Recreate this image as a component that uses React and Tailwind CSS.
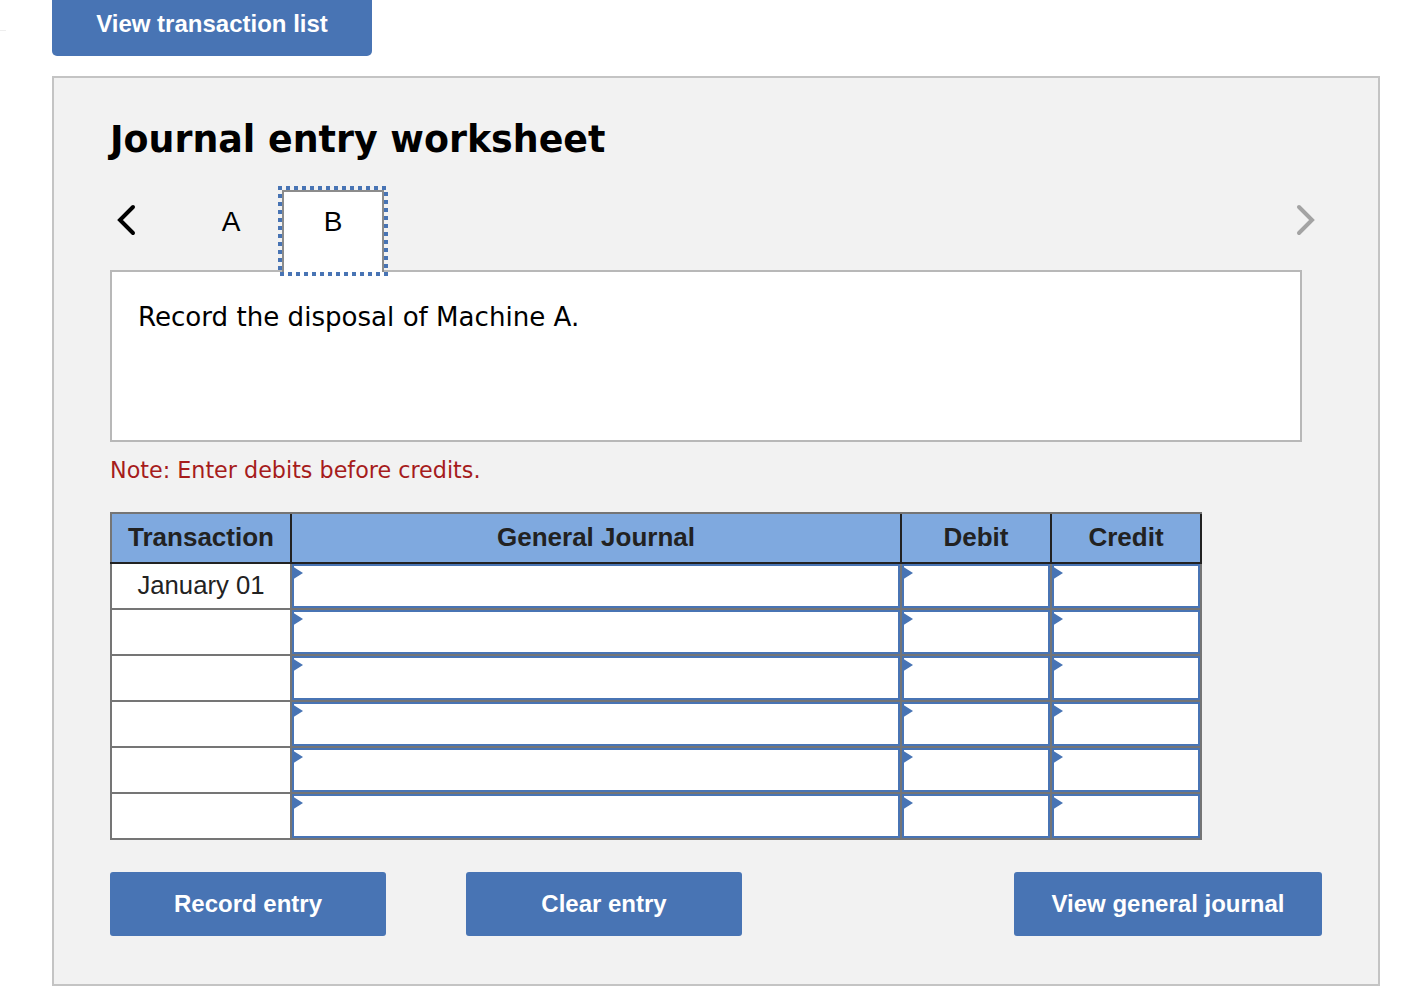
import React from 'react';

const sans = "font-['Liberation_Sans',Arial,sans-serif]";
const deja = "font-['DejaVu_Sans',Verdana,sans-serif]";

const rows = ['January 01', '', '', '', '', ''];

function Chevron({ dir, color }) {
  const d = dir === 'left' ? 'M17 3 L4 16 L17 29' : 'M3 3 L16 16 L3 29';
  return (
    <svg width="20" height="32" viewBox="0 0 20 32" fill="none">
      <path d={d} stroke={color} strokeWidth="4" strokeLinecap="round" strokeLinejoin="miter" />
    </svg>
  );
}

function EntryCell({ width }) {
  return (
    <div className={`${width} relative h-full shrink-0 border-r-2 border-[#757575]`}>
      <div className="h-full border-2 border-[#4874b4] bg-white" />
      <span className="absolute left-0 top-[2px] h-0 w-0 border-y-[7px] border-l-[11px] border-y-transparent border-l-[#4874b4]" />
    </div>
  );
}

function ActionButton({ width, children }) {
  return (
    <button className={`${width} ${sans} h-16 rounded-[3px] bg-[#4874b4] text-[24px] font-bold text-white`}>
      {children}
    </button>
  );
}

export default function App() {
  return (
    <div className="relative h-[1006px] w-[1410px] overflow-hidden bg-white pl-[52px]">
      <div className="absolute left-0 top-[30px] h-px w-[6px] bg-[#eeeeee]" />

      <button className={`${sans} h-14 w-[320px] rounded-b-[5px] bg-[#4874b4] pb-2 text-[24px] font-bold text-white`}>
        View transaction list
      </button>

      <div className="mt-5 h-[910px] w-[1328px] border-2 border-[#c4c4c4] bg-[#f2f2f2] pl-14 pt-[37px]">
        <h1 className={`${deja} text-[36.4px] font-bold leading-[50px] text-black`}>Journal entry worksheet</h1>

        <div className="relative mt-[21px] flex h-[84px] w-[1208px] items-start">
          <div className="ml-[6px] mt-[18px]">
            <Chevron dir="left" color="#000000" />
          </div>
          <div className={`${sans} ml-[85px] mt-[20px] w-5 text-center text-[28px] leading-[32px] text-black`}>A</div>
          <div className="relative z-10 ml-[37px] h-[90px] w-[110px] shrink-0">
            <div className="absolute inset-[4px] border-2 border-b-0 border-[#8c8c8c] bg-white" />
            <svg className="absolute inset-0" width="110" height="90" fill="none">
              <rect x="2" y="2" width="106" height="86" stroke="#4874b4" strokeWidth="4" strokeDasharray="4 4" strokeDashoffset="2" />
            </svg>
            <div className={`${sans} absolute left-0 right-0 top-[20px] text-center text-[28px] leading-[32px] text-black`}>B</div>
          </div>
          <div className="ml-auto mr-[2px] mt-[18px]">
            <Chevron dir="right" color="#a3a3a3" />
          </div>
        </div>

        <div className="h-[172px] w-[1192px] border-2 border-[#b8b8b8] bg-white px-[26px] pt-[27px]">
          <p className={`${deja} text-[26.1px] leading-[36px] text-black`}>Record the disposal of Machine A.</p>
        </div>

        <p className={`${deja} mt-[13px] text-[22.25px] leading-[30px] text-[#a61c1c]`}>Note: Enter debits before credits.</p>

        <div className="mt-[27px] w-[1092px]">
          <div className={`${sans} flex h-[52px] border-y-2 border-b-[#222222] border-t-[#757575] bg-[#7fa9df] pb-[2px] text-[26px] font-bold text-[#222222]`}>
            <div className="-mb-[2px] flex w-[182px] items-center justify-center border-l-2 border-r-2 border-l-[#757575] border-r-[#222222] pb-[2px]">Transaction</div>
            <div className="-mb-[2px] flex w-[610px] items-center justify-center border-r-2 border-[#222222] pb-[2px]">General Journal</div>
            <div className="-mb-[2px] flex w-[150px] items-center justify-center border-r-2 border-[#222222] pb-[2px]">Debit</div>
            <div className="-mb-[2px] flex w-[150px] items-center justify-center border-r-2 border-[#222222] pb-[2px]">Credit</div>
          </div>
          {rows.map((label, i) => (
            <div key={i} className="flex h-[46px] border-b-2 border-[#757575]">
              <div className={`${sans} flex h-full w-[182px] items-center justify-center border-x-2 border-[#757575] bg-white pb-[2px] text-[25.7px] text-[#222222]`}>
                {label}
              </div>
              <EntryCell width="w-[610px]" />
              <EntryCell width="w-[150px]" />
              <EntryCell width="w-[150px]" />
            </div>
          ))}
        </div>

        <div className="mt-8 flex w-[1212px]">
          <ActionButton width="w-[276px]">Record entry</ActionButton>
          <div className="ml-20">
            <ActionButton width="w-[276px]">Clear entry</ActionButton>
          </div>
          <div className="ml-auto">
            <ActionButton width="w-[308px]">View general journal</ActionButton>
          </div>
        </div>
      </div>
    </div>
  );
}
